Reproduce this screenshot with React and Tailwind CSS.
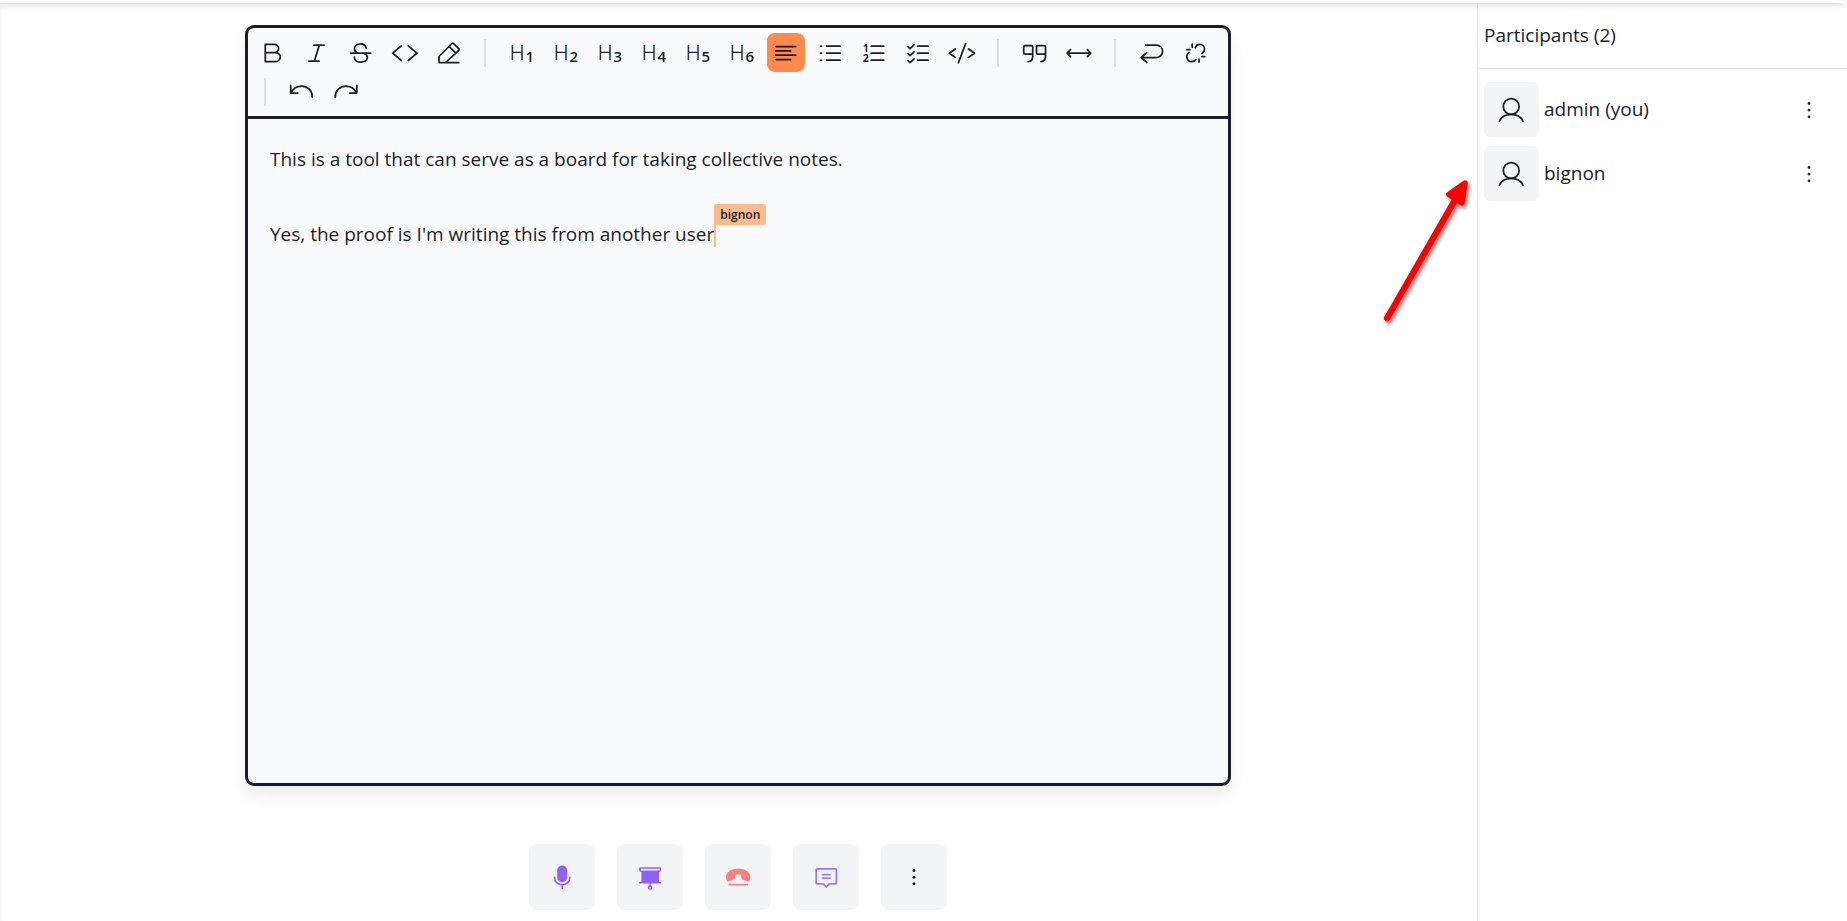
import React from "react";

const stroke = {
  fill: "none",
  stroke: "currentColor",
  strokeWidth: 1.75,
  strokeLinecap: "round",
  strokeLinejoin: "round",
};

function Icon({ children }) {
  return (
    <svg viewBox="0 0 28 28" className="size-7" aria-hidden="true" {...stroke}>
      {children}
    </svg>
  );
}

function HeadingLabel({ level }) {
  return (
    <span className="flex items-baseline gap-px leading-none">
      <span className="font-[Inter,sans-serif] text-xl leading-none font-light">H</span>
      <span className="translate-y-0.5 text-[15px] leading-none font-semibold">{level}</span>
    </span>
  );
}

const undoPath = "M2.7 7.3v7.7h7M3 14.7C5 10.5 9 8 13.6 8c6 0 10.7 4.8 10.7 11";

const tools = [
  { name: "Bold", icon: <Icon><path d="M6.3 5.3H15.5a4.1 4.1 0 0 1 0 8.2H6.3zM6.3 13.5H16.8a4.5 4.5 0 0 1 0 9H6.3z" /></Icon> },
  { name: "Italic", icon: <Icon><path d="M11 6.2h10M6 22.2h10M16.3 6.2l-5 16" /></Icon> },
  { name: "Strike", icon: <Icon><path d="M3.7 14.2h20M19.3 9.2C18.7 6.5 16.5 4.8 13.6 4.8c-3.6 0-6.1 2.2-6.1 5 0 2.2 1.4 3.6 3.5 4.4M17 14.2c2.1.8 3.3 2.2 3.3 4.3 0 2.8-2.6 4.7-6.3 4.7-4 0-6.5-2-6.7-5" /></Icon> },
  { name: "Code", icon: <Icon><path d="M10.3 6.8l-8.6 7.4 8.6 7.3M17.3 6.8l8.7 7.4-8.7 7.3" /></Icon> },
  { name: "Highlight", icon: <Icon><path d="M4 23.7v-6.2L16.9 4.5q.8-.8 1.6 0l5.3 5.2q.8.8 0 1.6L10.5 23.7zM14.3 7.6l6.3 6.2M10.5 23.7h13.2" /></Icon> },
  null,
  { name: "Heading 1", icon: <HeadingLabel level="1" /> },
  { name: "Heading 2", icon: <HeadingLabel level="2" /> },
  { name: "Heading 3", icon: <HeadingLabel level="3" /> },
  { name: "Heading 4", icon: <HeadingLabel level="4" /> },
  { name: "Heading 5", icon: <HeadingLabel level="5" /> },
  { name: "Heading 6", icon: <HeadingLabel level="6" /> },
  { name: "Paragraph", active: true, icon: <Icon><path d="M3.7 7.5h20M3.7 11.9h15M3.7 16.2h20M3.7 20.5h15" /></Icon> },
  { name: "Bullet list", icon: <Icon><path d="M10.5 7.2h13.5M10.5 14.2h13.5M10.5 21.2h13.5M4.5 7.2h1M4.5 14.2h1M4.5 21.2h1" /></Icon> },
  {
    name: "Ordered list",
    icon: (
      <Icon>
        <path d="M11.2 7.2h12.5M11.2 14.2h12.5M11.2 21.2h12.5" />
        <g fill="currentColor" stroke="none" fontFamily="Open Sans, sans-serif" fontSize="10" fontWeight="700">
          <text x="3" y="12.5">1</text>
          <text x="3" y="22.7">2</text>
        </g>
      </Icon>
    ),
  },
  { name: "Task list", icon: <Icon><path d="M13.5 7.2h10.5M13.5 14.2h10.5M13.5 21.2h10.5M4 7.6l2 2 4-3.7M4 14.6l2 2 4-3.7M4 21.6l2 2 4-3.7" /></Icon> },
  { name: "Code block", icon: <Icon><path d="M7.3 10l-6 4.2 6 4.2M20.5 10l6 4.2-6 4.2M17.6 4.6l-7.2 19.2" /></Icon> },
  null,
  { name: "Blockquote", icon: <Icon><path d="M11.7 15H4q-1.3 0-1.3-1.3V8q0-1.3 1.3-1.3h6.4q1.3 0 1.3 1.3v9.5c0 3-1.7 5-4.5 5M24.5 15h-7.7q-1.3 0-1.3-1.3V8q0-1.3 1.3-1.3h6.4q1.3 0 1.3 1.3v9.5c0 3-1.7 5-4.5 5" /></Icon> },
  { name: "Horizontal rule", icon: <Icon><path d="M2.2 14.2h23.4M5.4 10.7l-3.2 3.5 3.2 3.5M22.4 10.7l3.2 3.5-3.2 3.5" /></Icon> },
  null,
  { name: "Hard break", icon: <Icon><path d="M7.7 6.2h10.8a6.1 6.1 0 0 1 0 12.3H3.3M8.7 13.6l-5.4 4.9 5.4 4.9" /></Icon> },
  { name: "Clear format", icon: <Icon><path d="M13.4 8.6C14 6.4 15.7 5.3 17.7 5.3c2.7 0 4.8 2.1 4.8 4.8 0 2-1 3.6-2.7 4.5M7 13.4c-1.4 1-2.2 2.6-2.2 4.4 0 2.7 2.1 4.9 4.9 4.9 1.9 0 3.2-.8 4.2-2.1M10.2 5.2v3M5 10.7h3M17 20v3M19.8 17.5h3" /></Icon> },
  null,
  { name: "Undo", icon: <Icon><path d={undoPath} /></Icon> },
  { name: "Redo", icon: <Icon><path transform="translate(27.5 0) scale(-1 1)" d={undoPath} /></Icon> },
];

const controls = [
  {
    name: "Microphone",
    color: "text-[#9061f9]",
    icon: (
      <Icon>
        <rect x="9.2" y="2.5" width="10" height="16.8" rx="5" fill="currentColor" stroke="none" />
        <path d="M6.5 14.2a7.7 7.7 0 0 0 15.4 0M14.2 22v3.5" strokeWidth="1.6" />
      </Icon>
    ),
  },
  {
    name: "Presentation",
    color: "text-[#9061f9]",
    icon: (
      <Icon>
        <path d="M5.4 8h17.7v11.7H5.4z" fill="currentColor" stroke="none" />
        <rect x="3.9" y="5" width="20.4" height="3.2" rx="0.6" fill="#f3f4f6" strokeWidth="1.5" />
        <path d="M3.7 19.8h20.8M14.1 20v2.8" strokeWidth="1.5" />
        <circle cx="14.1" cy="24.5" r="1.6" strokeWidth="1.5" />
      </Icon>
    ),
  },
  {
    name: "Leave",
    color: "text-[#f98080]",
    icon: (
      <Icon>
        <path d="M14.2 5.5C7.5 5.5 2 9.3 2 14.3c0 1.6.4 2.9 1.1 3.9.4.5 1 .5 1.5.3l4.5-1.7c1.1-.4 1.6-1 1.8-2.1l.5-2.3c.2-.8.7-1 1.3-1h3c.6 0 1.1.2 1.3 1l.5 2.3c.2 1.1.7 1.7 1.8 2.1l4.5 1.7c.5.2 1.1.2 1.5-.3.7-1 1.1-2.3 1.1-3.9C26.4 9.3 20.9 5.5 14.2 5.5z" fill="currentColor" stroke="none" />
        <path d="M5.2 21.7h18" />
      </Icon>
    ),
  },
  {
    name: "Chat",
    color: "text-[#9d78fa]",
    icon: (
      <Icon>
        <path d="M5 5.8h18.6q.8 0 .8.8v13.5q0 .8-.8.8h-6.4l-2.9 3.3-2.9-3.3H5q-.8 0-.8-.8V6.6q0-.8.8-.8zM10.5 11.7h7.5M10.5 15.2h7.5" />
      </Icon>
    ),
  },
  { name: "More options", color: "text-black", icon: <Dots /> },
];

function Dots() {
  return (
    <svg viewBox="0 0 28 28" className="size-7" fill="currentColor" aria-hidden="true">
      <circle cx="14" cy="7.5" r="1.4" />
      <circle cx="14" cy="14.2" r="1.4" />
      <circle cx="14" cy="20.8" r="1.4" />
    </svg>
  );
}

function Toolbar() {
  return (
    <div role="toolbar" aria-label="Formatting" className="flex flex-wrap items-center gap-x-1.5 border-b-3 border-[#1b1d27] px-1.5 py-[5px]">
      {tools.map((tool, i) =>
        tool ? (
          <button
            key={tool.name}
            type="button"
            aria-label={tool.name}
            className={
              tool.active
                ? "flex h-[39px] w-[38px] items-center justify-center rounded-lg bg-[#ff8a4c]"
                : "flex h-[39px] w-[38px] items-center justify-center rounded-lg"
            }
          >
            {tool.icon}
          </button>
        ) : (
          <span key={i} className="mr-[11px] ml-2.5 h-7 w-0.5 bg-[#dfdfe2]" />
        )
      )}
    </div>
  );
}

function Editor() {
  return (
    <section className="flex w-[986px] max-w-full flex-1 flex-col rounded-[9px] border-3 border-[#1b1d27] bg-[#f9fafc] shadow-[0_10px_18px_-2px_rgba(0,0,0,0.09)]">
      <Toolbar />
      <div role="textbox" aria-multiline="true" aria-label="Notes" className="flex-1 px-[22px] py-[21px] text-[19px] leading-[38px]">
        <p>This is a tool that can serve as a board for taking collective notes.</p>
        <p className="mt-[37px]">
          Yes, the proof is I'm writing this from another user
          <span className="relative border-r-2 border-[#fdba8c]">
            <span className="absolute -top-[17px] left-0 rounded-[3px] rounded-bl-none bg-[#fdba8c] px-1.5 text-xs leading-[21px] font-semibold">
              bignon
            </span>
          </span>
        </p>
      </div>
    </section>
  );
}

function Participant({ name }) {
  return (
    <li className="flex items-center">
      <span className="flex size-[55px] items-center justify-center rounded-md bg-[#f3f4f6]">
        <Icon>
          <circle cx="13.2" cy="10.5" r="7.9" />
          <path d="M1.5 25C3.4 20.8 7.7 18.4 13.2 18.4S23 20.8 24.9 25" />
        </Icon>
      </span>
      <span className="ml-[5px] flex-1 text-[19px]">{name}</span>
      <button type="button" aria-label={"Options for " + name} className="mr-6 flex size-7 items-center justify-center">
        <Dots />
      </button>
    </li>
  );
}

function Pointer() {
  return (
    <svg viewBox="0 0 100 150" className="pointer-events-none absolute top-[171px] right-full h-[150px] w-[100px] overflow-visible drop-shadow-[2px_3px_2px_rgba(0,0,0,0.5)]" aria-hidden="true">
      <g stroke="#fe0000" fill="#fe0000" strokeLinejoin="round" strokeLinecap="round">
        <path d="M9 144.3L77 26" strokeWidth="6.3" />
        <path d="M87 9L70.8 20.5L84 28.7z" strokeWidth="5.5" />
      </g>
    </svg>
  );
}

export default function App() {
  return (
    <div className="flex min-h-screen flex-col bg-white font-['Open_Sans',sans-serif] text-[#1b1d27]">
      <header className="z-10 mr-1 h-[3px] bg-white shadow-[0_1px_6px_rgba(0,0,0,0.28)]" />
      <div className="flex flex-1 shadow-[inset_3px_0_3px_-1px_rgba(0,0,0,0.04)]">
        <main className="flex min-w-0 flex-1 flex-col items-center pt-[22px] pr-px pb-[11px]">
          <Editor />
          <nav aria-label="Call controls" className="mt-[58px] flex gap-[22px]">
            {controls.map((control) => (
              <button
                key={control.name}
                type="button"
                aria-label={control.name}
                className={"flex size-[66px] items-center justify-center rounded-lg bg-[#f3f4f6] " + control.color}
              >
                {control.icon}
              </button>
            ))}
          </nav>
        </main>
        <aside className="relative w-[370px] shrink-0 border-l border-[#e2e4e8]">
          <Pointer />
          <h2 className="border-b border-[#e2e4e8] pt-[18px] pb-[19px] pl-1.5 text-[19px] leading-7">Participants (2)</h2>
          <ul className="flex flex-col gap-[9px] pt-[13px] pl-1.5">
            <Participant name="admin (you)" />
            <Participant name="bignon" />
          </ul>
        </aside>
      </div>
    </div>
  );
}
